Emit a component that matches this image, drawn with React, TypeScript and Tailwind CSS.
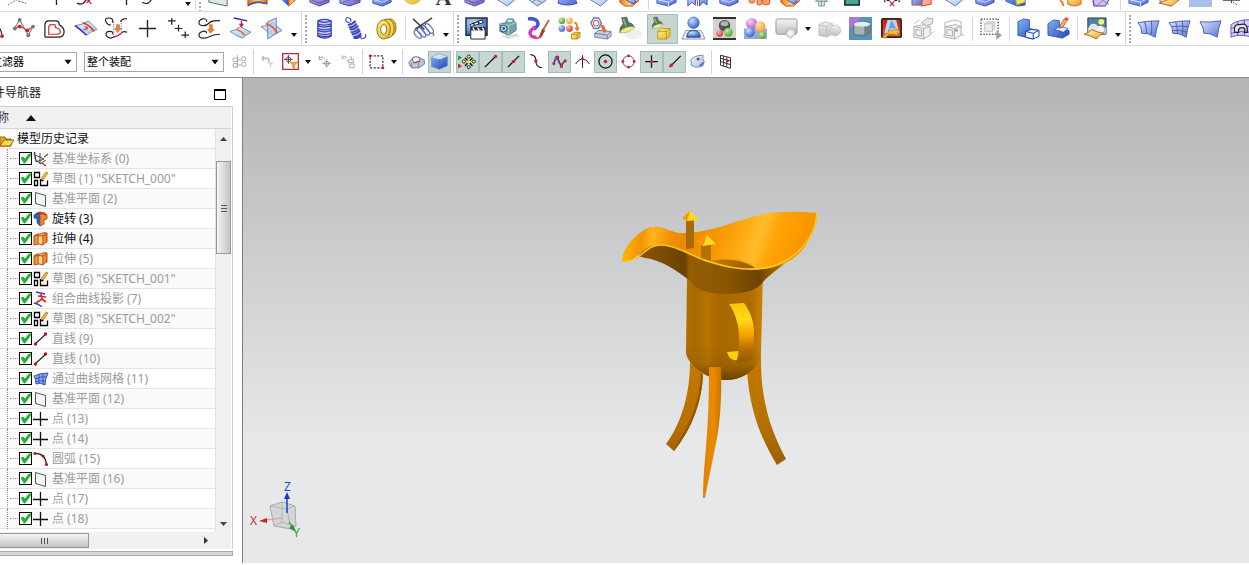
import React from "react";

const ink = "#222";
const red = "#d0222a";

/* Gradients shared by every icon on the page */
const SharedDefs = () => (
  <svg width="0" height="0" className="absolute" aria-hidden="true">
    <defs>
      <linearGradient id="blue" x1="0" y1="0" x2="1" y2="1">
        <stop offset="0" stopColor="#dbe6ff" />
        <stop offset="1" stopColor="#5a74d6" />
      </linearGradient>
      <linearGradient id="deep" x1="0" y1="0" x2="1" y2="1">
        <stop offset="0" stopColor="#7fb4f4" />
        <stop offset="1" stopColor="#2346b8" />
      </linearGradient>
      <linearGradient id="block" x1="0" y1="0" x2="1" y2="1">
        <stop offset="0" stopColor="#b8ccff" />
        <stop offset="1" stopColor="#4a62d4" />
      </linearGradient>
      <linearGradient id="pale" x1="0" y1="0" x2="1" y2="1">
        <stop offset="0" stopColor="#eaf3fb" />
        <stop offset="1" stopColor="#a9c6e6" />
      </linearGradient>
      <linearGradient id="gray" x1="0" y1="0" x2="0" y2="1">
        <stop offset="0" stopColor="#f2f2f2" />
        <stop offset="1" stopColor="#c0c0c0" />
      </linearGradient>
      <linearGradient id="gold" x1="0" y1="0" x2="1" y2="1">
        <stop offset="0" stopColor="#fff27a" />
        <stop offset="1" stopColor="#e8b428" />
      </linearGradient>
      <linearGradient id="orange" x1="0" y1="0" x2="1" y2="0">
        <stop offset="0" stopColor="#f07818" />
        <stop offset="0.5" stopColor="#ffd070" />
        <stop offset="1" stopColor="#e86a10" />
      </linearGradient>
      <radialGradient id="ball" cx="0.35" cy="0.3" r="0.8">
        <stop offset="0" stopColor="#c6e0ff" />
        <stop offset="1" stopColor="#2159c4" />
      </radialGradient>
      <radialGradient id="green" cx="0.35" cy="0.3" r="0.8">
        <stop offset="0" stopColor="#c8f09a" />
        <stop offset="1" stopColor="#3f9a24" />
      </radialGradient>
      <radialGradient id="amber" cx="0.35" cy="0.3" r="0.8">
        <stop offset="0" stopColor="#ffeaa0" />
        <stop offset="1" stopColor="#f0962a" />
      </radialGradient>
      <radialGradient id="rose" cx="0.35" cy="0.3" r="0.8">
        <stop offset="0" stopColor="#ffb8a8" />
        <stop offset="1" stopColor="#c82c20" />
      </radialGradient>
      <radialGradient id="violet" cx="0.35" cy="0.3" r="0.8">
        <stop offset="0" stopColor="#fbd0fa" />
        <stop offset="1" stopColor="#a94cc8" />
      </radialGradient>
    </defs>
  </svg>
);

const lamp = (
  <>
    <path d="M4 1l6-1 2 6q5 1 7 6L2 18q-1-6 4-10z" fill="#5a7a5e" stroke="#34493a" strokeWidth=".7" />
    <path d="M6 2l3 8" stroke="#a8c4a6" strokeWidth="1.400" />
    <path d="M2 18q1-4 8-6t9 0q-1 3-7 5t-10 1z" fill="#f2f08c" stroke="#7c8a3c" strokeWidth=".6" />
  </>
);

const ghostCube = (
  <>
    <path d="M3 10l11-2 6 2v9l-7 4-10-2z" fill="#f1f1f1" stroke="#acacac" />
    <path d="M3 10l10 2 7-2M13 12v11M5 13l6 1v6l-6-1z" fill="none" stroke="#acacac" />
  </>
);

const icons: Record<string, React.ReactNode> = {
  // main tool row
  "Studio spline": (
    <>
      <path d="M14 8q7 2 8 12" fill="none" stroke={ink} strokeWidth="1.3" />
      <circle cx="22" cy="20" r="2" fill={red} />
    </>
  ),
  "Fit curve": (
    <>
      <path d="M3 11L8 3l9 16 5-9" fill="none" stroke="#888" strokeWidth="1.2" />
      <path d="M3 12l5-3 8 5 6-4" fill="none" stroke="#cc3b3b" strokeWidth="1.3" />
      <g fill="#777">
        <circle cx="8" cy="3" r="2" />
        <circle cx="3" cy="12" r="2" />
        <circle cx="22" cy="10" r="2" />
        <circle cx="17" cy="19" r="2" />
      </g>
      <circle cx="8" cy="10" r="2" fill={red} />
      <circle cx="16" cy="14" r="2" fill={red} />
    </>
  ),
  "Offset curve": (
    <g fill="none">
      <path d="M2 9q0-5 4-5h7q4 0 4 4 5 3 5 7 0 6-6 6H3q-1 0-1-1z" stroke="#222" strokeWidth="1.3" />
      <path d="M6 11q0-3 3-3h3q1 0 1 3 5 1 5 4 0 3-4 3H6z" stroke="#dc3030" strokeWidth="1.3" />
    </g>
  ),
  "Curve on surface": (
    <>
      <path d="M1 9q6 0 14-5l9 9q-5 1-11 6Q8 15 1 9z" fill="url(#pale)" stroke="#6d8ab8" />
      <path d="M1 9q6 4 12 10" stroke="#2c2cc8" strokeWidth="1.600" fill="none" />
      <path d="M9 6q7 2 12 9" stroke="#e23c20" strokeWidth="1.800" fill="none" />
      <path d="M9 14l5-3m-3-1l3 1-1 3" stroke={red} fill="none" />
    </>
  ),
  "Bridge curve": (
    <>
      <path d="M8 6Q9 1 4 1T1 5t5 3M16 5q2-4 7-3M8 18q1-3-3-3t-4 3 5 4q2 0 4-2M17 17q2-3 6-1" fill="none" stroke="#222" strokeWidth="1.200" />
      <path d="M9 5v15M17 4v13" stroke="#3030c8" strokeDasharray="1 1.500" />
      <path d="M9 21q5-1 8-4" stroke={red} strokeWidth="1.500" fill="none" />
      <path d="M12 8h3v4h2l-4 4-3-4h2z" fill="#ee8432" stroke="#b85a18" strokeWidth=".6" />
    </>
  ),
  Point: <path d="M12 3v18M3 12h18" stroke={ink} strokeWidth="1.400" />,
  "Point set": <path d="M5 1v7M1 4h8M12 8v7M8 12h8M19 15v7M15 19h8" stroke={ink} strokeWidth="1.300" />,
  "Join curves": (
    <>
      <path d="M9 5Q9 1 5 2T1 6t5 3q3 0 6-3t11-2M9 17q0-3-4-2t-4 4 5 3q3 0 7-2t10-2" fill="none" stroke="#222" strokeWidth="1.200" />
      <path d="M12 8h3v5h2l-4 4-3-4h2z" fill="#ee8432" stroke="#b85a18" strokeWidth=".6" />
    </>
  ),
  "Project curve": (
    <>
      <path d="M5 1l14 3" stroke="#2828c8" strokeWidth="1.500" />
      <path d="M1 15q6-1 11-5l11 6q-4 2-9 6Q8 20 1 15z" fill="url(#pale)" stroke="#6d8ab8" />
      <path d="M8 13q6 2 8 6" stroke="#ef6a2c" strokeWidth="1.800" fill="none" />
      <path d="M13 4v6m-2-3l2 3 2-3" stroke={red} strokeWidth="1.400" fill="none" />
    </>
  ),
  "Intersection curve": (
    <>
      <path d="M1 10q6 0 12-4l10 8q-4 2-9 5Q8 16 1 10z" fill="url(#pale)" stroke="#6d8ab8" />
      <path d="M8 5l9-4v16l-9 6z" fill="#b7cdef" fillOpacity=".8" stroke="#6d7fc0" />
      <path d="M6 7q8 2 12 10" stroke="#ef5a2c" strokeWidth="1.800" fill="none" />
    </>
  ),
  Spring: (
    <path
      d="M5 4q7-3 14 0M5 4q7 3 14 0M5 7q7 3 14 0M5 9q7 3 14 0M5 12q7 3 14 0M5 14q7 3 14 0M5 17q7 3 14 0M5 19q7 3 14 0M5 4v16q7 4 14 0V4"
      fill="#c9cdf4"
      stroke="#3a44b4"
      strokeWidth="1.300"
    />
  ),
  "Tension spring": (
    <g fill="none" stroke="#3a44b4" strokeWidth="1.200">
      <path d="M6 6Q1 5 2 2t5 0v3M17 20q1 4 4 2t1-4" />
      <path d="M4 8l8-4 6 14-8 4z" fill="#a6acec" stroke="none" />
      <path d="M4 8q4 0 8-4M5 11q5 0 8-4M6 13q5 0 9-4M7 16q5 0 9-4M8 18q5 0 9-4M10 21q5 0 8-4M10 22q5 1 8-3" strokeWidth="1.600" />
    </g>
  ),
  "Disc spring": (
    <>
      <ellipse cx="16" cy="11" rx="6" ry="9" fill="#e8c33a" stroke="#8d6c12" />
      <ellipse cx="13" cy="12" rx="7" ry="10" fill="#f2d654" stroke="#8d6c12" />
      <ellipse cx="9" cy="13" rx="7" ry="10" fill="url(#gold)" stroke="#8d6c12" />
      <ellipse cx="9" cy="13" rx="3" ry="5" fill="#fff" stroke="#8d6c12" />
    </>
  ),
  "Delete spring": (
    <g fill="none">
      <g stroke="#5f70cc" strokeWidth="1.300">
        <ellipse cx="6" cy="18" rx="2.500" ry="5" transform="rotate(-40 6 18)" />
        <ellipse cx="10" cy="16" rx="2.500" ry="6" transform="rotate(-40 10 16)" />
        <ellipse cx="14" cy="14" rx="2.500" ry="6" transform="rotate(-40 14 14)" />
        <ellipse cx="18" cy="12" rx="2.500" ry="6" transform="rotate(-40 18 12)" />
        <path d="M21 17q3 1 1 3" />
      </g>
      <path d="M1 2l12 11M21 1L3 13" stroke="#444" strokeWidth="1.600" />
    </g>
  ),
  Movie: (
    <>
      <path d="M1 1h22v18H1z" fill="url(#ball)" stroke="#23303c" strokeWidth="1.500" />
      <path d="M5 8l13-5 1 3-13 4z" fill="#fff" stroke="#222" />
      <path d="M8 6l2 2M13 4l2 3" stroke="#222" strokeWidth="1.600" />
      <path d="M6 11h15v12H6z" fill="#fff" stroke="#222" />
      <path d="M6 11h15v3H6z" fill="#333" />
      <path d="M8 11l2 3M13 11l2 3M18 11l2 3" stroke="#fff" strokeWidth="1.300" />
    </>
  ),
  Snapshot: (
    <>
      <path d="M5 20l17-3 2 3-12 3z" fill="#ddd" />
      <path d="M4 7l6-1 2-4h6l1 3 2 1v8l-8 5-9-4z" fill="#6fa5a8" stroke="#447078" strokeWidth=".8" />
      <path d="M4 7l9 2 8-3M13 9v10" fill="none" stroke="#a7d0d2" />
      <circle cx="8" cy="12" r="3.500" fill="#bfe5ee" stroke="#2d4c58" />
      <circle cx="8" cy="12" r="1.500" fill="#2c5d86" />
      <path d="M12 3h5v2h-5z" fill="#d9f3f0" />
    </>
  ),
  "Edit display": (
    <>
      <path d="M1 2q8-1 10 3t-4 8" fill="none" stroke="#3c50ec" strokeWidth="3.500" />
      <path d="M9 10q-8 5-5 9 1 2 6 2" fill="none" stroke="#c83cc0" strokeWidth="3.500" />
      <path d="M8 22q6 1 8-4" fill="none" stroke="#ef4068" strokeWidth="2" />
      <path d="M23 3l-6 10" stroke="#b86a30" strokeWidth="2" />
      <path d="M16 12l3 2-3 5-4 2z" fill="#8d4b20" />
    </>
  ),
  "Show by type": (
    <>
      <circle cx="4" cy="4" r="3.500" fill="url(#green)" />
      <circle cx="12" cy="4" r="3.500" fill="url(#amber)" />
      <circle cx="4" cy="12" r="3.500" fill="url(#ball)" />
      <circle cx="12" cy="12" r="3.500" fill="url(#rose)" />
      <path d="M17 5q4 0 4 6h2l-3 4-3-4h2q0-4-2-4z" fill="#ee7a2a" />
      <path d="M14 18l3-2h6v5l-3 2h-6z" fill="url(#gold)" stroke="#a37a14" strokeWidth=".8" />
      <path d="M14 18h6v5M20 18l3-2" fill="none" stroke="#a37a14" strokeWidth=".8" />
    </>
  ),
  "Move to layer": (
    <>
      <path d="M5 1h5l3 5-3 6H5L2 6z" fill="#eef2fb" stroke="#6b78a8" strokeWidth="1.400" />
      <circle cx="7.500" cy="6.500" r="3" fill="none" stroke="#cf4456" />
      <path d="M6 17l4-3 13 1v5l-4 3-13-2z" fill="#c2cfe2" stroke="#6a7da0" />
      <path d="M6 17l13 2 4-4M19 19v4" fill="none" stroke="#6a7da0" />
      <path d="M13 8q4 0 4 5h2l-3 4-3-4h1q0-2-2-2z" fill="#ef6a30" />
    </>
  ),
  Spotlight: (
    <>
      <path d="M3 18l15-6 6 6q-3 6-13 5z" fill="#efefef" />
      <g transform="translate(-2 0) scale(.9)">{lamp}</g>
    </>
  ),
  "Scene light": (
    <>
      <g transform="scale(.65)">{lamp}</g>
      <path d="M7 15l4-3h9v8l-4 3H7z" fill="url(#gold)" stroke="#b88c18" strokeWidth=".8" />
      <path d="M7 15h9v8M16 15l4-3" fill="none" stroke="#b88c18" strokeWidth=".8" />
    </>
  ),
  Perspective: (
    <>
      <path d="M4 14h16l4 9H0z" fill="#eef1f4" stroke="#8d99a6" />
      <path d="M5 21q0-7 7-7t7 7z" fill="url(#ball)" stroke="#1c459c" />
      <circle cx="12" cy="6" r="6" fill="url(#ball)" stroke="#2a56ae" strokeWidth=".6" />
    </>
  ),
  "Scene editor": (
    <>
      <path d="M0 1h24v22H0z" fill="#d2d2d2" />
      <path d="M0 0h24v2H0zM0 22h24v2H0z" fill="#333" />
      <circle cx="12" cy="9" r="6" fill="#555" />
      <ellipse cx="12" cy="7" rx="4" ry="2.500" fill="#b4b4b4" />
      <circle cx="7" cy="17" r="3.500" fill="url(#rose)" />
      <circle cx="16" cy="16" r="4.500" fill="url(#green)" />
    </>
  ),
  Materials: (
    <>
      <path d="M0 12h24v11H0z" fill="#9ca6d0" />
      <circle cx="8" cy="7" r="6" fill="url(#violet)" />
      <circle cx="17" cy="10" r="5.500" fill="url(#amber)" />
      <circle cx="6" cy="16" r="5" fill="url(#ball)" />
      <circle cx="19" cy="19" r="3.500" fill="url(#green)" />
    </>
  ),
  "Layer category": (
    <>
      <rect x="1" y="2" width="22" height="16" rx="2" fill="url(#gray)" stroke="#9b9b9b" />
      <path d="M14 12l7 1v5l-5 4-5-4z" fill="#dedede" stroke="#a5a5a5" strokeWidth=".8" />
      <circle cx="16" cy="17" r="2.500" fill="#f6f6f6" />
    </>
  ),
  "Ghost solids": (
    <>
      <path d="M1 8l6-3 8 2v11l-6 3-8-2z" fill="url(#gray)" stroke="#c0c0c0" />
      <path d="M1 8l8 2 6-3M9 10v11" fill="none" stroke="#c0c0c0" />
      <circle cx="18" cy="14" r="5.500" fill="url(#gray)" stroke="#c0c0c0" />
    </>
  ),
  "True shading": (
    <>
      <path d="M0 0h24v24H0z" fill="#5a92bc" />
      <path d="M0 0h12q-2 9-12 12z" fill="#a678d8" />
      <path d="M5 8q0-3 9-3t8 3v9q-1 2-9 2t-8-2z" fill="#a5b4b4" stroke="#445" strokeWidth=".6" />
      <ellipse cx="13.500" cy="7.500" rx="8.500" ry="2.500" fill="#e3eeea" />
      <path d="M16 10q5 0 6-2v9q-1 2-6 2z" fill="#6f8080" />
    </>
  ),
  "Raster image": (
    <>
      <rect x="1" y="1" width="22" height="21" rx="2" fill="#3c2620" />
      <path d="M3 3h18v17H3z" fill="#ef5a32" />
      <path d="M7 3h10l3 14H5z" fill="#b9d6f4" />
      <path d="M12 3l5 9h-8z" fill="#6d9fd8" />
      <path d="M3 3h5L4 15zM21 3h-4l3 12z" fill="#d82416" />
      <path d="M2 21l7-5 0-3 3 1 7-1 2 2-3 1 1 4-4-2-6 0-3 4z" fill="#f6c02c" stroke="#a8641c" strokeWidth=".6" />
    </>
  ),
  "Box camera": (
    <>
      {ghostCube}
      <path d="M11 6l6-5 6 1-1 5-6 2z" fill="#e8e8e8" stroke="#acacac" />
      <path d="M20 18l4-3M3 7l6-4" stroke="#c0c0c0" />
    </>
  ),
  "Box view": (
    <>
      {ghostCube}
      <path d="M3 10V6l10-3 7 2v5M1 20l2-2M20 18l3 1" stroke="#acacac" fill="none" />
      <circle cx="15" cy="14" r="1.500" fill="#999" />
    </>
  ),
  "Clip section": (
    <>
      <path d="M2 2h18v16H2z" fill="#fafafa" stroke="#666" strokeWidth="1.600" strokeDasharray="1.500 1.500" />
      <path d="M6 7l2-2h8v8l-2 2H6zM6 7h8v8M14 7l2-2" fill="#ededed" stroke="#b4b4b4" strokeWidth=".8" />
      <path d="M18 14l6 5-6 5z" fill="#a0a0a0" />
    </>
  ),
  Extrude: (
    <>
      <path d="M2 5l6-3 6 1v9l9 2v5l-6 4-15-4z" fill="url(#deep)" stroke="#1f3f9c" strokeWidth=".8" />
      <path d="M10 15l6-2 8 1v6l-6 3-8-2z" fill="#f4f8ff" stroke="#1b3db0" />
      <path d="M10 15l8 2 6-3M18 17v6" fill="none" stroke="#1b3db0" />
    </>
  ),
  "Edit section": (
    <>
      <path d="M1 7l6-4 6 1v8l10 2v4l-7 4-15-3z" fill="url(#deep)" stroke="#1f3f9c" strokeWidth=".8" />
      <path d="M8 14q3-5 10-3l4 1-5 4q-6-3-9-2z" fill="#e6efff" stroke="#1b3db0" strokeWidth=".7" />
      <path d="M21 3l-4 7-4 2 1-4 4-6z" fill="#f6b450" stroke="#a03c20" strokeWidth=".7" />
      <path d="M18 2l2-2 3 2-2 2z" fill="#e05038" />
    </>
  ),
  "Show and hide": (
    <>
      <path d="M4 1h19v17H4z" fill="#4b83a4" stroke="#2a3a48" />
      <path d="M4 11h19v7H4z" fill="#a4c8dc" />
      <circle cx="18" cy="5" r="3" fill="#fbf06a" />
      <circle cx="10" cy="12" r="5" fill="#e6e8ea" />
      <circle cx="17" cy="13" r="4" fill="#f2f2f2" />
      <path d="M0 18q5-1 8-5 5 3 13 4-5 1-8 6-6-4-13-5z" fill="url(#amber)" stroke="#b46a14" />
    </>
  ),
  "Ruled surface": (
    <>
      <path d="M1 6q9-2 22-2-3 8-4 17-8-5-14-4Q5 10 1 6z" fill="url(#blue)" stroke="#4a5cae" />
      <path d="M8 5q2 6 2 12M15 4q1 7 0 14" fill="none" stroke="#4a5cae" />
    </>
  ),
  "Curve mesh": (
    <>
      <path d="M1 6q9-2 22-2-3 8-4 17-8-5-14-4Q5 10 1 6z" fill="url(#blue)" stroke="#4a5cae" />
      <path d="M8 5q2 6 2 12M15 4q1 7 0 14M4 10q8-1 17 0M5 14q7-1 15 2" fill="none" stroke="#4a5cae" />
    </>
  ),
  Sweep: <path d="M1 5q9 1 22-1-3 8-4 17-8-5-14-4Q5 10 1 5z" fill="url(#blue)" stroke="#4a5cae" />,
  "N-sided surface": (
    <>
      <path d="M1 8q9-6 22-5v18q-14-4-22 0z" fill="#d7cdf8" stroke="#6a4ec0" />
      <path d="M8 5v14M15 3v17M1 12q10-4 22-2M1 17q10-3 22-1" fill="none" stroke="#6a4ec0" />
      <path d="M5 16q-2-9 5-8 9-3 8 8h-3q2-5-2-5-5 0-4 5z" fill="#e6e6fa" stroke="#222" strokeWidth="1.300" />
    </>
  ),

  // top row
  "Dashed curve": <path d="M2 22q5-4 12-6M13 18l8 2" fill="none" stroke="#555" strokeDasharray="2 1.500" />,
  "Top point": <path d="M12 4v18M3 12h18" stroke={ink} strokeWidth="1.400" />,
  "Trim curve": (
    <>
      <path d="M1 20q6 3 10-4" fill="none" stroke={ink} strokeWidth="1.300" />
      <path d="M10 14l6 7m-5-1l5-5" stroke={red} strokeWidth="1.300" />
    </>
  ),
  "Extend curve": <path d="M-4 19q7 4 10-4" fill="none" stroke={ink} strokeWidth="1.300" />,
  "Datum plane": <path d="M2 3l19 4v16L2 19z" fill="#dfe9df" stroke="#5a685c" />,
  "Top extrude": (
    <>
      <path d="M2 6h20v15q-10-4-20 2z" fill="url(#orange)" stroke="#b04c18" />
      <path d="M2 22q9-5 16-2l4 0" stroke="#3454d0" strokeWidth="1.600" fill="none" />
    </>
  ),
  "Top revolve": (
    <>
      <path d="M5 5h7v18l-7-6z" fill="url(#deep)" />
      <path d="M12 5h7v12l-7 6z" fill="url(#orange)" stroke="#b86410" />
    </>
  ),
  "Block A": (
    <>
      <path d="M2 14l9-4 11 3v6l-10 4-10-4z" fill="url(#block)" stroke="#5848c0" />
      <path d="M2 16l10 4 10-4" stroke="#d02860" fill="none" />
    </>
  ),
  "Block B": (
    <>
      <path d="M1 14l10-5 11 4v6l-11 4-10-3z" fill="url(#block)" stroke="#3848b8" />
      <path d="M4 19l9-3 8 2" stroke="#d03860" fill="none" />
    </>
  ),
  "Block C": (
    <>
      <path d="M3 13l8-4 11 4v6l-9 4-10-3z" fill="url(#block)" stroke="#3848b8" />
      <path d="M3 16l10 3 9-4" stroke="#d7d7ff" fill="none" />
    </>
  ),
  Sphere: <circle cx="12" cy="11" r="10" fill="url(#gold)" stroke="#b8a23c" strokeWidth=".6" />,
  "Sheet A": <path d="M3 16l7-6 12 6-8 7z" fill="url(#pale)" stroke="#5872c0" />,
  "Sheet B": (
    <>
      <path d="M2 15l8-4 12 6-9 6z" fill="url(#pale)" stroke="#5d78a8" />
      <path d="M6 13l11 6M16 14l-9 5" stroke="#6d88b8" />
    </>
  ),
  Cylinder: <path d="M5 4h12q1 10 5 16-9 4-20 0 3-6 3-16z" fill="url(#block)" stroke="#3c48b8" />,
  "Orange block": (
    <>
      <path d="M2 14h14v6l6-3-7 6H7l-5-4z" fill="url(#orange)" stroke="#c04c1c" />
      <path d="M9 12l12 2-5 7-7-4z" fill="url(#blue)" stroke="#3a4fc0" />
    </>
  ),
  "Blue block": (
    <>
      <path d="M2 13l9-6 11 4v8l-8 4-12-3z" fill="url(#block)" stroke="#3c58c0" />
      <path d="M2 16l12 3 8-4M14 19v4" stroke="#e6efff" fill="none" />
    </>
  ),
  Mirror: (
    <>
      <path d="M2 12h8v10l-4-3-4 4zM14 12h8v10l-4-3-4 4z" fill="url(#blue)" stroke="#3a58c4" />
      <path d="M12 6v17" stroke="#c04848" />
    </>
  ),
  Pattern: (
    <g fill="#f8a068" stroke="#d05820">
      <circle cx="4" cy="17" r="3" />
      <circle cx="12" cy="19" r="3" />
      <circle cx="19" cy="18" r="4" />
    </g>
  ),
  Instance: <path d="M7 6h10v12h-2v5H9v-5H7zM5 18h14M7 14h10M12 6v17" fill="#d5ece8" stroke="#7a9894" />,
  "Green box": <path d="M4 5h15v17H4z" fill="#4aa596" stroke="#222" strokeWidth="1.600" />,
  "Delete point": (
    <>
      <path d="M5 17v2M20 17v2M7 17h3M15 17h3" stroke={ink} strokeWidth="1.400" />
      <path d="M10 18l5 5m0-5l-5 5" stroke={red} strokeWidth="1.200" />
    </>
  ),
  "Red block": (
    <>
      <path d="M1 10h12v12H1z" fill="url(#block)" stroke="#c04838" />
      <path d="M12 13l9-2v10l-10 2z" fill="#f6b090" stroke="#d03c20" />
    </>
  ),
  "Yellow block": (
    <>
      <path d="M2 13l9-4 11 4v9l-8 1-12-5z" fill="url(#deep)" stroke="#3c58b8" />
      <path d="M12 14l10-4v9l-9 3z" fill="#f4e268" stroke="#b8a030" />
    </>
  ),
  "Orange solid": (
    <>
      <path d="M9 12q7-3 14 0v9q-7 4-14 0z" fill="url(#amber)" stroke="#d07828" />
      <path d="M1 17q4 2 3 6" stroke="#e88030" strokeWidth="2" fill="none" />
    </>
  ),
  Wireframe: (
    <>
      <path d="M3 13l8-4 11 4-6 10H4z" fill="#c8c0f8" stroke="#5038c0" />
      <path d="M2 18l5 5 6-6 7 4" stroke="#e02c4c" fill="none" strokeDasharray="2 1" />
    </>
  ),
  Folder: (
    <>
      <path d="M2 10l8-3 12 3v6l-9 7-11-5z" fill="url(#pale)" stroke="#5a78b4" />
      <path d="M1 20l10-4 12 0-9 7z" fill="url(#amber)" stroke="#c86c20" />
    </>
  ),
  Panel: <path d="M0 4h24v20H0z" fill="#a8c0ec" />,
  Crosshair: (
    <>
      <path d="M3 17h18M12 8v12" stroke="#2c3c90" />
      <path d="M6 14l12 8" stroke={red} strokeDasharray="2 1" />
    </>
  ),

  // selection row
  "Ghost assembly": (
    <g fill="none" stroke="#aaa" strokeWidth="1.400">
      <path d="M3 7h6v5H3zM3 15h6v5H3zM9 3v18M9 10h6M9 17h6" />
      <circle cx="18" cy="8" r="3" />
      <circle cx="18" cy="16" r="3" />
    </g>
  ),
  "Undo filter": (
    <>
      <path d="M3 7h10q3 3 0 6M3 7l3-4m-3 4l3 4" fill="none" stroke="#bbb" strokeWidth="2.500" />
      <path d="M12 13h10l-4 4v5l-2-1v-4z" fill="#d2d2d2" />
    </>
  ),
  "Snap filter": (
    <>
      <path d="M1 1h22v22H1z" fill="#fff" stroke="#b4283c" strokeWidth="1.800" />
      <path d="M9 3v12M3 9h12" stroke="#333" strokeWidth="1.400" />
      <circle cx="9" cy="9" r="3.500" fill="none" stroke="#8c4a4a" strokeWidth="1.300" />
      <path d="M11 13h11l-4 4v5l-3-2v-3z" fill="#f6a926" stroke="#b06c10" strokeWidth=".7" />
    </>
  ),
  "Reset origin": (
    <g fill="none" stroke="#999" strokeWidth="1.500">
      <path d="M2 8q4-7 9 0M2 3v6h5M14 8v14M7 15h14" />
      <circle cx="14" cy="15" r="3.500" />
    </g>
  ),
  "Reset tree": (
    <g fill="none" stroke="#aaa" strokeWidth="1.500">
      <path d="M2 5q5-4 8 2M2 2v5h5M13 5h4v5M12 9h8v5h-8zM14 16h7v6h-7zM9 11h3" />
    </g>
  ),
  "Rectangle select": (
    <>
      <path d="M3 4h18v17H3z" fill="none" stroke="#333" strokeWidth="1.700" strokeDasharray="3 2" />
      <circle cx="3" cy="4" r="2" fill={red} />
      <circle cx="21" cy="21" r="2" fill={red} />
    </>
  ),
  "Hidden edges": (
    <>
      <path d="M1 14l6-8h8l8 4v6l-8 5H5z" fill="#bcc7de" stroke="#4c556e" />
      <path d="M6 8q5-5 10-1l1 5-9 2z" fill="#eef1fa" stroke="#4c556e" />
      <path d="M8 14l9-3" stroke={red} strokeWidth="1.400" />
      <path d="M5 14v6M15 13v7" stroke="#777" />
    </>
  ),
  "Shaded cube": (
    <>
      <path d="M1 6l10-5 12 4v13l-11 5-11-4z" fill="url(#deep)" stroke="#4d83c8" />
      <path d="M1 6l11 3 11-4-12-4z" fill="#c6e2fa" />
      <path d="M12 9v14" stroke="#e03050" strokeDasharray="2 2" />
    </>
  ),
  "Enable snap": (
    <>
      <path d="M-3 2l6 4-6 4z" fill="#16a028" />
      <path d="M-3 15l6 4-6 4z" fill="#d42020" />
      <g fill="#f4ee8c" stroke="#222" strokeWidth="1.500">
        <circle cx="14" cy="4" r="2.500" />
        <circle cx="14" cy="21" r="2.500" />
        <circle cx="6" cy="12" r="2.500" />
        <circle cx="22" cy="12" r="2.500" />
      </g>
      <path d="M8 6l12 13M20 6L8 19" stroke="#222" strokeWidth="2.500" />
      <circle cx="14" cy="12.500" r="3" fill="#fae93c" />
    </>
  ),
  "End point": (
    <>
      <path d="M3 21L20 4" stroke="#111" strokeWidth="2" />
      <circle cx="20" cy="4" r="2.800" fill={red} />
    </>
  ),
  "Mid point": (
    <>
      <path d="M3 21L21 3" stroke="#111" strokeWidth="2" />
      <circle cx="12" cy="12" r="2.800" fill={red} />
    </>
  ),
  "Control point": (
    <>
      <path d="M2 1q9 0 9 10t10 11" fill="none" stroke="#111" strokeWidth="1.700" />
      <circle cx="11" cy="11" r="2.800" fill={red} />
    </>
  ),
  "Spline pole": (
    <>
      <path d="M3 18q3-22 6-10t6 8 6-4" fill="none" stroke="#4040d0" strokeWidth="1.800" />
      <path d="M3 14l6-9 6 15 6-10" fill="none" stroke="#222" strokeWidth="1.400" />
      <g fill={red}>
        <circle cx="3" cy="15" r="2.500" />
        <circle cx="9" cy="5" r="2.500" />
        <circle cx="15" cy="20" r="2.500" />
        <circle cx="21" cy="11" r="2.500" />
      </g>
    </>
  ),
  Intersection: (
    <>
      <path d="M12 2v20M1 16q4-8 11-8t11 8" fill="none" stroke="#222" strokeWidth="1.600" />
      <circle cx="12" cy="8" r="2.300" fill={red} />
    </>
  ),
  "Arc center": (
    <>
      <circle cx="12" cy="12" r="10.500" fill="none" stroke="#111" strokeWidth="2" />
      <circle cx="12" cy="12" r="2.800" fill={red} />
    </>
  ),
  Quadrant: (
    <>
      <circle cx="12" cy="12" r="9" fill="none" stroke="#444" strokeWidth="1.500" />
      <g fill={red}>
        <circle cx="12" cy="3" r="2.300" />
        <circle cx="12" cy="21" r="2.300" />
        <circle cx="3" cy="12" r="2.300" />
        <circle cx="21" cy="12" r="2.300" />
      </g>
    </>
  ),
  "Existing point": (
    <>
      <path d="M12 2v20M2 12h20" stroke="#111" strokeWidth="2" />
      <circle cx="12" cy="12" r="2.600" fill={red} />
    </>
  ),
  "Point on curve": (
    <>
      <path d="M4 21L22 3" stroke="#111" strokeWidth="2" />
      <circle cx="7" cy="18" r="2.800" fill={red} />
    </>
  ),
  "Point on face": (
    <>
      <path d="M1 10Q6 2 21 2q-2 5 2 11-7 0-8 8-9 1-13-3 1-4-1-8z" fill="url(#pale)" stroke="#5877c0" strokeWidth="1.300" />
      <path d="M15 21q0-6 8-8l-2 6z" fill="#5877c0" />
      <circle cx="13" cy="8" r="2.500" fill={red} />
    </>
  ),
  "Bounded grid": (
    <>
      <path d="M4 2l16 4v17L4 18zM9 3v17M14 5v16M4 7l16 4M4 12l16 5" fill="none" stroke="#333" strokeWidth="1.600" />
      <circle cx="15" cy="11" r="2.300" fill={red} />
    </>
  ),
};

const Glyph = ({ name, className }: { name: string; className: string }) => (
  <svg viewBox="0 0 24 24" className={`${className} shrink-0 overflow-visible`} aria-hidden="true">
    {icons[name]}
  </svg>
);

const Caret = ({ className = "" }: { className?: string }) => (
  <svg viewBox="0 0 6 4" className={`w-[6px] h-1 shrink-0 ${className}`} aria-hidden="true">
    <path d="M0 0h6L3 4z" fill="#111" />
  </svg>
);

const Grip = () => <span className="h-7 ml-[3px] border-l-2 border-dotted border-[#aaa]" />;

/*
 * A toolbar is a list of tokens: an icon name, "*name" for a pressed tool,
 * "|" for a divider, "||" for a toolbar edge with its grip, "v" for an
 * overflow arrow, "-" for a split-button arrow and "_" for blank space.
 */
const ToolItem = ({ token }: { token: string }) => {
  if (token === "|") return <span className="w-1.5 shrink-0 flex justify-center"><span className="w-px h-6 bg-[#d4d6d8]" /></span>;
  if (token === "||")
    return (
      <span className="w-2 shrink-0 flex items-center self-stretch border-l border-[#d4d6d8]">
        <Grip />
      </span>
    );
  if (token === "_") return <span className="w-2 shrink-0" />;
  if (token === "v")
    return (
      <button aria-label="More tools" className="w-[14px] h-6 shrink-0 flex items-end justify-center pb-1">
        <Caret />
      </button>
    );
  if (token === "-")
    return (
      <button aria-label="Options" className="w-3 h-6 shrink-0 flex items-center justify-center">
        <Caret />
      </button>
    );
  if (token === "A")
    return (
      <button aria-label="Text" className="w-[31px] h-6 shrink-0 font-['Liberation_Serif',serif] font-bold text-[22px] leading-6 text-[#333]">
        A
      </button>
    );
  const active = token.startsWith("*");
  const name = active ? token.slice(1) : token;
  return (
    <button
      aria-label={name}
      className={`w-[31px] h-[30px] shrink-0 flex items-center justify-center border ${
        active ? "bg-[#c5d6d3] border-[#a5bcb8]" : "border-transparent"
      }`}
    >
      <Glyph name={name} className="w-[23px] h-[23px]" />
    </button>
  );
};

const topRow = [
  "Dashed curve", "_", "Top point", "Trim curve", "_", "Top point", "Extend curve", "_", "v", "||",
  "Datum plane", "_", "Top extrude", "Top revolve", "Block A", "Block B", "Block C", "Sphere", "A",
  "Block A", "Sheet A", "Sheet B", "Cylinder", "Sheet A", "Orange block", "|", "Blue block", "Mirror",
  "Block C", "Pattern", "Orange block", "Instance", "Green box", "_", "Delete point", "Red block", "Sheet A",
  "Block C", "Yellow block", "_", "_", "_", "Orange solid", "Wireframe", "|", "Blue block", "Folder", "Panel", "Crosshair",
];

const mainRow = [
  "Studio spline", "Fit curve", "Offset curve", "Curve on surface", "Bridge curve", "Point", "Point set",
  "Join curves", "Project curve", "Intersection curve", "v", "||", "Spring", "Tension spring", "Disc spring",
  "|", "Delete spring", "v", "||", "Movie", "Snapshot", "Edit display", "Show by type", "Move to layer",
  "Spotlight", "*Scene light", "Perspective", "Scene editor", "Materials", "Layer category", "-",
  "Ghost solids", "True shading", "Raster image", "Box camera", "Box view", "|", "Clip section", "|",
  "Extrude", "Edit section", "|", "Show and hide", "v", "||", "Ruled surface", "Curve mesh", "Sweep", "N-sided surface",
];

const snapTools = [
  "*Enable snap", "*End point", "*Mid point", "Control point", "*Spline pole", "Intersection",
  "*Arc center", "Quadrant", "*Existing point", "*Point on curve", "Point on face",
];

const SmallTool = ({ name, wide = false }: { name: string; wide?: boolean }) => {
  const active = name.startsWith("*");
  const label = active ? name.slice(1) : name;
  return (
    <button
      aria-label={label}
      className={`w-[23px] h-[22px] shrink-0 flex items-center justify-center border ${
        active ? "bg-[#c5d6d3] border-[#a5bcb8]" : "border-transparent"
      }`}
    >
      <Glyph name={label} className={wide ? "w-[17px] h-[17px]" : "w-[15px] h-[15px]"} />
    </button>
  );
};

const Picker = ({ label, value, className }: { label: string; value: string; className: string }) => (
  <div className={`relative shrink-0 ${className}`}>
    <select
      aria-label={label}
      defaultValue={value}
      className="appearance-none block w-full h-5 bg-white border border-[#a8a8a8] pl-0.5 text-[11px] leading-4 text-black"
    >
      <option>{value}</option>
    </select>
    <Caret className="absolute right-1.5 top-2 scale-125 pointer-events-none" />
  </div>
);

const Rule = () => <span className="w-px h-6 mx-0.5 bg-[#d4d6d8] shrink-0" />;

const SelectionBar = () => (
  <div className="h-[31px] flex items-center overflow-hidden">
    <Picker label="Selection filter" value="过滤器" className="w-[89px] -ml-3" />
    <Picker label="Selection scope" value="整个装配" className="w-[140px] ml-[7px] mr-1" />
    <SmallTool name="Ghost assembly" wide />
    <Rule />
    <SmallTool name="Undo filter" />
    <SmallTool name="Snap filter" wide />
    <ToolItem token="-" />
    <SmallTool name="Reset origin" />
    <SmallTool name="Reset tree" />
    <Rule />
    <SmallTool name="Rectangle select" wide />
    <ToolItem token="-" />
    <Rule />
    <SmallTool name="Hidden edges" wide />
    <SmallTool name="*Shaded cube" wide />
    <Rule />
    {snapTools.map((name) => (
      <SmallTool key={name} name={name} />
    ))}
    <Rule />
    <SmallTool name="Bounded grid" />
  </div>
);

/* Feature icons of the history tree, on a 16px grid */
const featureIcons: Record<string, React.ReactNode> = {
  csys: (
    <>
      <path d="M2 4l9 4-8 3zM7 2v11l6-4M2 4v4l6 5" fill="none" stroke="#333" strokeWidth=".9" />
      <path d="M1.500 4V1" stroke="#3030c0" strokeWidth="1.500" />
      <path d="M11 6l4-3" stroke="#208838" strokeWidth="1.500" />
      <path d="M9 12l4 3" stroke="#c03030" strokeWidth="1.500" />
    </>
  ),
  sketch: (
    <>
      <path d="M1.500 1.500h5v5h-5zM1.500 9.500h3v5h-3zM7.500 8v6.500h7V9.500M7.500 9.500h3" fill="none" stroke="#000" strokeWidth="1.300" />
      <path d="M8 9l1-3 4-5 2 1-4 6z" fill="#f6b42c" stroke="#9c6414" strokeWidth=".6" />
    </>
  ),
  plane: <path d="M2.500 1.500l10 3v11l-10-3z" fill="#f4f8f4" stroke="#4c5c50" />,
  revolve: (
    <>
      <path d="M1 4q3-3 6-3v14l-3-3V8L1 7z" fill="#2f5fc4" stroke="#27407c" strokeWidth=".6" />
      <path d="M7 1q5 0 7 3v4l-3 1v4l-4 2z" fill="#f08a28" stroke="#a04614" strokeWidth=".8" />
      <path d="M3 3q5-2 10 1" stroke="#c82018" fill="none" />
    </>
  ),
  extrude: (
    <>
      <path d="M1 5q3-3 6-2 4-2 7-1v9q-3 1-4 3-4-2-9 0z" fill="url(#orange)" stroke="#b8501c" />
      <path d="M5 4v9M10 4v10M1 5q5-1 9 0l4-3" stroke="#b8501c" fill="none" />
      <path d="M6 6h3v6H6z" fill="#ffe48a" />
    </>
  ),
  project: (
    <>
      <path d="M3 1l9 2M1 12q5 1 8 4" stroke="#3040c8" strokeWidth="1.300" fill="none" />
      <path d="M8 3l1 5-6 4M9 8l4 3M5 5l8 1" stroke="#d42c1c" strokeWidth="1.700" fill="none" />
    </>
  ),
  line: (
    <>
      <path d="M2 13L13 3" stroke="#222" strokeWidth="1.200" />
      <circle cx="2.500" cy="13" r="1.700" fill="#b01818" />
      <circle cx="12.500" cy="3" r="1.700" fill="#b01818" />
    </>
  ),
  mesh: (
    <>
      <path d="M1 5q6-3 14-3-3 6-3 12-5-3-9-1 0-5-2-8z" fill="#8fa2f0" stroke="#3c54b8" />
      <path d="M6 3v10M10 3v10M2 8q6-3 12-2M3 11q4-2 9-1" stroke="#3c54b8" fill="none" />
    </>
  ),
  point: <path d="M7.500 1v14M0 8.500h15" stroke="#111" strokeWidth="1.300" />,
  arc: (
    <>
      <path d="M1 2.500q11-1 12.500 11" fill="none" stroke="#222" strokeWidth="1.300" />
      <circle cx="2" cy="2.500" r="1.600" fill="#b81818" />
      <circle cx="10" cy="5" r="1.600" fill="#b81818" />
      <circle cx="13.500" cy="13.500" r="1.600" fill="#b81818" />
    </>
  ),
};

type Feature = { icon: string; label: string; solid?: boolean };

const features: Feature[] = [
  { icon: "csys", label: "基准坐标系 (0)" },
  { icon: "sketch", label: '草图 (1) "SKETCH_000"' },
  { icon: "plane", label: "基准平面 (2)" },
  { icon: "revolve", label: "旋转 (3)", solid: true },
  { icon: "extrude", label: "拉伸 (4)", solid: true },
  { icon: "extrude", label: "拉伸 (5)" },
  { icon: "sketch", label: '草图 (6) "SKETCH_001"' },
  { icon: "project", label: "组合曲线投影 (7)" },
  { icon: "sketch", label: '草图 (8) "SKETCH_002"' },
  { icon: "line", label: "直线 (9)" },
  { icon: "line", label: "直线 (10)" },
  { icon: "mesh", label: "通过曲线网格 (11)" },
  { icon: "plane", label: "基准平面 (12)" },
  { icon: "point", label: "点 (13)" },
  { icon: "point", label: "点 (14)" },
  { icon: "arc", label: "圆弧 (15)" },
  { icon: "plane", label: "基准平面 (16)" },
  { icon: "point", label: "点 (17)" },
  { icon: "point", label: "点 (18)" },
];

const FeatureRow = ({ feature }: { feature: Feature }) => (
  <li className="h-5 shrink-0 border-b border-[#e4e4e4] odd:bg-[#fafafa] even:bg-white">
    <label className="h-full flex items-center pl-[7px]">
      <span className="w-3 h-5 shrink-0 flex items-center border-l border-dotted border-[#999]">
        <span className="w-2 ml-0.5 border-t border-dotted border-[#999]" />
      </span>
      <span className="relative w-[13px] h-[13px] shrink-0">
        <input
          type="checkbox"
          defaultChecked
          className="peer appearance-none block w-[13px] h-[13px] bg-white border border-black"
        />
        <svg viewBox="0 0 13 13" className="absolute inset-0 hidden peer-checked:block pointer-events-none" aria-hidden="true">
          <path d="M2 6l2-1 2 2 4-5h2v1L6 11H5z" fill="#1db030" stroke="#1db030" strokeWidth=".7" />
        </svg>
      </span>
      <svg viewBox="0 0 16 16" className="w-4 h-4 ml-px mr-[3px] shrink-0" aria-hidden="true">
        {featureIcons[feature.icon]}
      </svg>
      <span className={`whitespace-nowrap ${feature.solid ? "text-[#111]" : "text-[#9a9a9a]"}`}>{feature.label}</span>
    </label>
  </li>
);

const Navigator = () => (
  <aside className="w-[243px] shrink-0 flex flex-col bg-white border-r border-[#7c7e80] text-xs pb-[7px]">
    <header className="h-7 shrink-0 flex items-center justify-between pr-4 pt-0.5 overflow-hidden">
      <h2 className="-ml-[7px] text-[#222] whitespace-nowrap">件导航器</h2>
      <button aria-label="Undock" className="w-3 h-[11px] mt-0.5 border border-t-2 border-black" />
    </header>
    <div className="flex-1 min-h-0 mr-[9px] flex flex-col border-t border-r border-[#cfcfcf]">
      <div className="h-[22px] shrink-0 mr-px flex items-center gap-[17px] bg-[#f0f0f0] border-b border-[#d4d4d4] overflow-hidden">
        <span className="-ml-[3px] text-[#333] whitespace-nowrap">称</span>
        <svg viewBox="0 0 10 6" className="w-[10px] h-1.5 shrink-0" aria-hidden="true">
          <path d="M0 6h10L5 0z" fill="#111" />
        </svg>
      </div>
      <div className="flex-1 min-h-0 flex">
        <div className="flex-1 min-w-0 overflow-hidden">
          <div className="h-5 flex items-center border-b border-[#e4e4e4] bg-[#fbfbfb]">
            <svg viewBox="0 0 14 14" className="w-[14px] h-[14px] shrink-0 mt-1" aria-hidden="true">
              <path d="M0 3h5l1 2h5v7H0z" fill="#e8a818" stroke="#94640c" />
              <path d="M0 12l4-6h10l-4 6z" fill="#ffd84a" stroke="#94640c" />
            </svg>
            <span className="ml-[3px] text-[#111]">模型历史记录</span>
          </div>
          <ul>
            {features.map((feature) => (
              <FeatureRow key={feature.label} feature={feature} />
            ))}
          </ul>
        </div>
        <div className="w-4 mr-px shrink-0 flex flex-col items-center bg-[#f0f0f0] border-l border-[#e2e2e2]">
          <button aria-label="Scroll up" className="h-8 w-full shrink-0 flex justify-center pt-2">
            <svg viewBox="0 0 7 4" className="w-[7px] h-1"><path d="M0 4h7L3.500 0z" fill="#444" /></svg>
          </button>
          <div className="w-[15px] h-[93px] shrink-0 flex flex-col items-center justify-center gap-px bg-linear-to-r from-[#f4f4f4] to-[#c2c4c8] border border-[#989898]">
            <span className="w-1.5 h-0.5 border-b border-[#555]" />
            <span className="w-1.5 h-0.5 border-b border-[#555]" />
            <span className="w-1.5 h-0.5 border-b border-[#555]" />
          </div>
          <button aria-label="Scroll down" className="mt-auto h-4 w-full shrink-0 flex justify-center items-center">
            <svg viewBox="0 0 7 4" className="w-[7px] h-1"><path d="M0 0h7L3.500 4z" fill="#444" /></svg>
          </button>
        </div>
      </div>
      <div className="h-[17px] shrink-0 mr-px flex items-center justify-between bg-[#f0f0f0] pr-[23px]">
        <div className="w-[89px] h-[15px] flex items-center justify-center gap-px bg-linear-to-b from-[#f4f4f4] to-[#c2c4c8] border border-l-0 border-[#989898]">
          <span className="w-0.5 h-1.5 border-r border-[#555]" />
          <span className="w-0.5 h-1.5 border-r border-[#555]" />
          <span className="w-0.5 h-1.5 border-r border-[#555]" />
        </div>
        <button aria-label="Scroll right">
          <svg viewBox="0 0 4 7" className="w-1 h-[7px]"><path d="M0 0v7l4-3.500z" fill="#333" /></svg>
        </button>
      </div>
    </div>
    <div className="h-[5px] mt-0.5 mr-[9px] shrink-0 bg-[#d6d8d8] border border-l-0 border-[#a9abab]" />
  </aside>
);

/* Ritual wine cup model */
const Cup = () => (
  <svg viewBox="615 205 210 300" className="absolute left-[372px] top-[127px] w-[210px] h-[300px]" role="img" aria-label="Cup model">
    <defs>
      <linearGradient id="body" x1="686" x2="763" y1="0" y2="0" gradientUnits="userSpaceOnUse">
        <stop offset="0" stopColor="#b06e00" />
        <stop offset="0.120" stopColor="#a86a00" />
        <stop offset="0.280" stopColor="#b87400" />
        <stop offset="0.420" stopColor="#a86800" />
        <stop offset="0.850" stopColor="#b06e00" />
        <stop offset="1" stopColor="#d08000" />
      </linearGradient>
      <linearGradient id="under" x1="640" x2="785" y1="0" y2="0" gradientUnits="userSpaceOnUse">
        <stop offset="0" stopColor="#8a5600" />
        <stop offset="0.310" stopColor="#6a4200" />
        <stop offset="0.340" stopColor="#945d00" />
        <stop offset="0.600" stopColor="#8a5700" />
        <stop offset="0.820" stopColor="#6c4300" />
        <stop offset="1" stopColor="#b87600" />
      </linearGradient>
      <linearGradient id="inner" x1="690" y1="225" x2="812" y2="268" gradientUnits="userSpaceOnUse">
        <stop offset="0" stopColor="#e88a00" />
        <stop offset="0.250" stopColor="#f79800" />
        <stop offset="0.430" stopColor="#ffae14" />
        <stop offset="0.530" stopColor="#ffbc2c" />
        <stop offset="0.660" stopColor="#ffa408" />
        <stop offset="0.800" stopColor="#fd9a00" />
        <stop offset="1" stopColor="#ee8e00" />
      </linearGradient>
      <linearGradient id="lip" x1="625" y1="240" x2="690" y2="246" gradientUnits="userSpaceOnUse">
        <stop offset="0" stopColor="#ffb400" />
        <stop offset="0.250" stopColor="#f29600" />
        <stop offset="0.420" stopColor="#ffb420" />
        <stop offset="0.700" stopColor="#ee9000" />
        <stop offset="1" stopColor="#e88a00" stopOpacity="0" />
      </linearGradient>
      <linearGradient id="handle" x1="0" y1="302" x2="0" y2="362" gradientUnits="userSpaceOnUse">
        <stop offset="0" stopColor="#ffc400" />
        <stop offset="0.300" stopColor="#ffd91a" />
        <stop offset="0.550" stopColor="#f5a000" />
        <stop offset="0.780" stopColor="#b87000" />
        <stop offset="1" stopColor="#925a00" />
      </linearGradient>
      <linearGradient id="base" x1="0" y1="345" x2="0" y2="380" gradientUnits="userSpaceOnUse">
        <stop offset="0" stopColor="#7c4d00" stopOpacity="0" />
        <stop offset="0.500" stopColor="#7c4d00" stopOpacity=".2" />
        <stop offset="1" stopColor="#5e3a00" stopOpacity=".9" />
      </linearGradient>
      <linearGradient id="well" x1="700" x2="760" y1="0" y2="0" gradientUnits="userSpaceOnUse">
        <stop offset="0" stopColor="#e08a00" />
        <stop offset="0.400" stopColor="#b87200" />
        <stop offset="1" stopColor="#8c5800" />
      </linearGradient>
      <linearGradient id="mid" x1="703" x2="721" y1="0" y2="0" gradientUnits="userSpaceOnUse">
        <stop offset="0" stopColor="#e08200" />
        <stop offset="0.600" stopColor="#ea8b00" />
        <stop offset="1" stopColor="#c97400" />
      </linearGradient>
      <linearGradient id="leg" x1="0" x2="0" y1="355" y2="460" gradientUnits="userSpaceOnUse">
        <stop offset="0" stopColor="#c47800" />
        <stop offset="0.600" stopColor="#b87200" />
        <stop offset="1" stopColor="#a06200" />
      </linearGradient>
    </defs>
    <path d="M690 362l13 12c-1 25-10 53-29 77l-8-7c15-20 24-50 24-82z" fill="url(#leg)" />
    <path d="M701 372l2 3c-1 25-10 53-29 76l-1-1c18-26 27-50 28-78z" fill="#925a00" />
    <path d="M747 372l14-20c-1 42 7 74 25 107l-9 6c-17-28-27-55-30-93z" fill="url(#leg)" />
    <path d="M687 278l76-4-2 78c-1 8-2 9-4 12-6 10-18 16-31 16-12 0-26-6-35-17-4-5-5-8-5-12z" fill="url(#body)" />
    <path d="M686 345h75l0 7c-1 8-2 9-4 12-6 10-18 16-31 16-12 0-26-6-35-17-4-5-5-8-5-12z" fill="url(#base)" />
    <path d="M709 367h12c1 30-1 58-5 76-4 20-8 40-11 55h-2c0-15 1-30 3-50 2-25 3-45 3-81z" fill="url(#mid)" />
    <path d="M638 256c8-9 17-14 34-11l28 12c20 11 50 14 66 11 12-3 17-5 20-6-10 9-17 13-23 20-5 7-15 12-38 12-18 0-29-4-34-12-14-12-30-22-46-24z" fill="url(#under)" />
    <path
      d="M622 260c2-11 9-20 17-26 6-5 11-8 19-7 8 1 13 5 21 6 13 1 31-3 47-8 25-8 39-13 57-13q18-1 34 1c1 8-3 19-10 30-7 13-22 24-45 26-22 1-42-2-57-9l-25-11c-14-5-25-5-34 0-7 4-11 9-17 12-4 1-8 1-7-1z"
      fill="url(#inner)"
    />
    <path
      d="M622 260c2-11 9-20 17-26 6-5 11-8 19-7 8 1 13 5 21 6h15v22l-14-7c-14-5-25-5-34 0-7 4-11 9-17 12-4 1-8 1-7 0z"
      fill="url(#lip)"
    />
    <path d="M710 260c14-3 34 0 45 8-14 2-30 0-45-8z" fill="url(#well)" />
    <path d="M710 260q25-4 42 5" fill="none" stroke="#f5a010" strokeWidth="1.400" />
    <path
      d="M622 261c7 1 14-2 20-7 8-7 14-11 27-8 16 4 27 12 41 16 22 7 44 9 60 5 25-7 45-27 47-54"
      fill="none"
      stroke="#ffc814"
      strokeWidth="1.500"
    />
    <path d="M686 219h8v29l-8 1z" fill="#a86900" />
    <path d="M701 244h10v17l-10-3z" fill="#b57100" />
    <path d="M690 211l10 9-13 1-5-3z" fill="#ffd820" />
    <path d="M690 211l-3 10-5-3z" fill="#f09a10" />
    <path d="M707 235l9 9-13 2-6-5z" fill="#ffd820" />
    <path d="M707 235l-4 11-6-5z" fill="#f09a10" />
    <path d="M727 352l12-1-1 9q-8 2-11-8z" fill="#ffcf10" />
    <path d="M729 304l15-1c6 8 10 18 10 30 0 12-1 20-3 27l-15 3c6-16 4-45-7-59z" fill="url(#handle)" />
  </svg>
);

const Triad = () => (
  <svg
    viewBox="0 0 60 62"
    className="absolute left-1 bottom-[22px] w-[60px] h-[62px] font-['Noto_Sans',sans-serif] text-[12px]"
    aria-hidden="true"
  >
    <path d="M23 27l4 20 17 3 5-3-1-20-13-4z" fill="#d3d6d8" stroke="#aaa" />
    <path d="M23 27l17 3 8-3M40 30l4 20M27 47l8-4 14 4M35 23v20" fill="none" stroke="#b4b6b8" />
    <path d="M40 34V18" stroke="#1c3cc8" strokeWidth="1.500" />
    <path d="M40 13l3 7h-6z" fill="#1c3cc8" />
    <path d="M36 39l-18 2" stroke="#e9a0a8" strokeWidth="1.500" />
    <path d="M12 42l8-3v5z" fill="#d02028" />
    <path d="M42 43l4 6" stroke="#58a858" strokeWidth="1.500" />
    <path d="M49 53l-7-4 4-3z" fill="#2c8c34" />
    <text x="37" y="12" fill="#2848d0">Z</text>
    <text x="3" y="46" fill="#cc2a30">X</text>
    <text x="46" y="58" fill="#2c9c3c">Y</text>
  </svg>
);

export default function App() {
  return (
    <div className="h-screen flex flex-col overflow-hidden bg-white pb-0.5 font-['Noto_Sans','Noto_Sans_CJK_SC',sans-serif]">
      <SharedDefs />
      <div className="shrink-0 border-b border-[#8a8d8e]">
        <div className="h-3 flex items-end overflow-hidden pl-0.5 pb-px border-b border-[#d8dadb]">
          {topRow.map((token, i) => (
            <ToolItem key={i} token={token} />
          ))}
        </div>
        <div className="h-[34px] flex items-center overflow-hidden border-b border-[#d8dadb]">
          <div className="flex items-center self-stretch -ml-[23px]">
            {mainRow.map((token, i) => (
              <ToolItem key={i} token={token} />
            ))}
          </div>
        </div>
        <SelectionBar />
      </div>
      <div className="flex-1 min-h-0 flex">
        <Navigator />
        <main className="relative flex-1 overflow-hidden bg-linear-to-b from-[#b3b4b6] to-[#e6e8e9] to-75%">
          <Cup />
          <Triad />
        </main>
      </div>
    </div>
  );
}
